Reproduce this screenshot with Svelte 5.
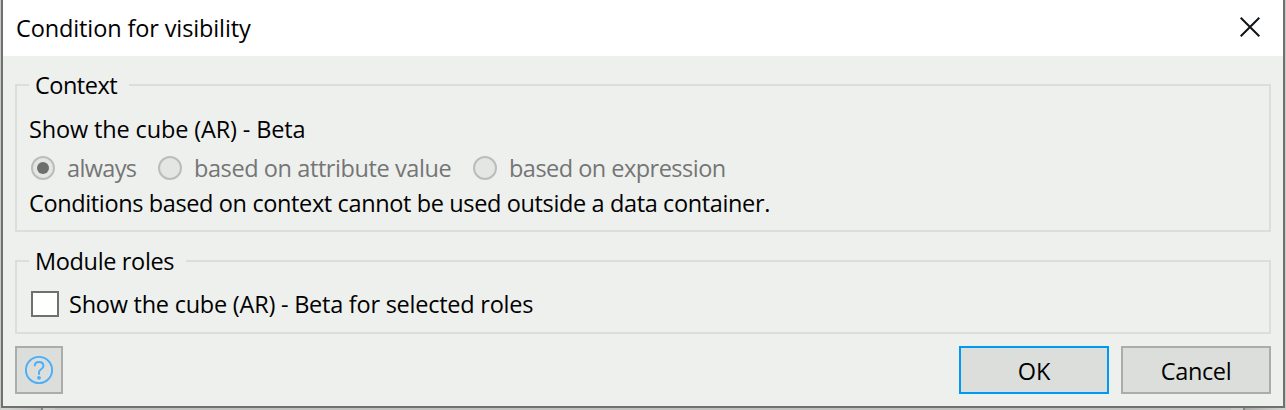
<script>
  const options = [
    { label: 'always', checked: true, cls: 'always' },
    { label: 'based on attribute value', checked: false, cls: 'attribute' },
    { label: 'based on expression', checked: false, cls: 'expression' }
  ];
</script>

<div class="backdrop">
  <section class="dialog">
    <header>
      <span class="title">Condition for visibility</span>
      <svg class="close" width="20" height="20" viewBox="0 0 20 20">
        <path d="M.7.7 19.3 19.3M19.3.7.7 19.3" stroke="#111418" stroke-width="2" fill="none" />
      </svg>
    </header>
    <main>
      <fieldset class="context">
        <legend><span class="t-context">Context</span></legend>
        <div class="line"><span class="t-show">Show the cube (AR) - Beta</span></div>
        <div class="radios">
          {#each options as o}
            <div class="option {o.cls}">
              <i class="radio" class:checked={o.checked}></i>
              <span>{o.label}</span>
            </div>
          {/each}
        </div>
        <div class="line"><span class="t-cond">Conditions based on context cannot be used outside a data container.</span></div>
      </fieldset>
      <fieldset class="roles">
        <legend><span class="t-module">Module roles</span></legend>
        <div class="check">
          <i class="box"></i>
          <span class="t-check">Show the cube (AR) - Beta for selected roles</span>
        </div>
      </fieldset>
      <footer>
        <div class="btn help">
          <svg width="28" height="28" viewBox="0 0 28 28" fill="none" stroke="#4aaef8">
            <circle cx="14" cy="14" r="13.1" stroke-width="1.9" />
            <path d="M9.7 10.2C9.7 7.6 11.5 6 14.1 6s4.3 1.6 4.3 3.9c0 3.5-4.4 3.3-4.4 6.4v2.4" stroke-width="1.9" />
            <circle cx="14" cy="21.8" r="1.9" fill="#4aaef8" stroke="none" />
          </svg>
        </div>
        <div class="btn ok"><span>OK</span></div>
        <div class="btn cancel"><span class="t-cancel">Cancel</span></div>
      </footer>
    </main>
  </section>
  <div class="below"><i class="left"></i><i class="pale"></i><i class="mid"></i><i class="pale"></i><i class="right"></i></div>
</div>

<style>
  .backdrop {
    width: 1286px;
    height: 410px;
    overflow: hidden;
    box-sizing: border-box;
    padding: 0 1px;
    background: #c8cac8;
    font: 400 23.5px/32px "Open Sans", "Noto Sans", sans-serif;
    color: #000;
  }
  .backdrop span { white-space: nowrap; }
  .title { letter-spacing: -.12px; }
  .t-context { letter-spacing: -.5px; }
  .t-show { letter-spacing: -.14px; }
  .always span { letter-spacing: -.65px; }
  .attribute span { letter-spacing: -.41px; }
  .expression span { letter-spacing: -.52px; }
  .t-cond { letter-spacing: -.37px; }
  .t-module { letter-spacing: -.35px; }
  .t-check { letter-spacing: -.24px; }
  .t-cancel { letter-spacing: -.35px; }
  .dialog {
    box-sizing: border-box;
    width: 1284px;
    height: 408px;
    border: solid #6e716e;
    border-width: 0 2px 2px;
    background: #eef0ee;
  }
  header {
    box-sizing: border-box;
    height: 56px;
    padding: 12px 23px 0 13px;
    background: #fff;
    display: flex;
    justify-content: space-between;
  }
  .close { margin-top: 5px; }
  main { padding: 13px 12px 0; }
  fieldset {
    box-sizing: border-box;
    margin: 0;
    min-width: 0;
    border: 2px solid #dbdedb;
    padding: 0 12px;
  }
  .context { height: 163px; }
  .roles { height: 89px; margin-top: 13px; }
  legend {
    box-sizing: border-box;
    height: 32px;
    padding: 0 0 0 6px;
  }
  .context legend { width: 100px; }
  .roles legend { width: 157px; }
  .line { height: 32px; padding-top: 12px; }
  .radios {
    display: flex;
    height: 32px;
    padding: 7px 0 0 2px;
    color: #757575;
  }
  .radios + .line { padding-top: 3px; }
  .option { display: flex; gap: 12px; }
  .option.always { width: 127px; }
  .option.attribute { width: 315px; }
  .radio {
    box-sizing: border-box;
    width: 24px;
    height: 24px;
    margin-top: 4px;
    border: 2px solid #bbbdbb;
    border-radius: 50%;
    background: #e4e6e3;
    display: grid;
    place-items: center;
  }
  .radio.checked::after {
    content: '';
    width: 12px;
    height: 12px;
    border-radius: 50%;
    background: #6c6f6c;
  }
  .check {
    display: flex;
    gap: 10px;
    padding: 11px 0 0 2px;
  }
  .box {
    box-sizing: border-box;
    width: 28px;
    height: 26px;
    margin-top: 3px;
    border: 2px solid #6e716e;
    background: #fff;
  }
  footer {
    display: flex;
    gap: 12px;
    margin-top: 12px;
  }
  .btn {
    box-sizing: border-box;
    width: 150px;
    height: 48px;
    border: 2px solid #abadab;
    background: #dcdedb;
    padding-top: 7px;
    text-align: center;
  }
  .help {
    width: 48px;
    padding: 0;
    margin-right: auto;
    display: grid;
    place-items: center;
  }
  .ok { border-color: #0099f2; }
  .below { display: flex; height: 2px; }
  .left { width: 40px; border-right: 2px solid #858785; background: linear-gradient(90deg, #d2d4d2, #bbb); }
  .pale { width: 12px; background: #c9cbc9; }
  .mid { flex: 1; background: #bfc1bf; }
  .right { width: 40px; border-left: 2px solid #858785; background: linear-gradient(90deg, #aaa, #d2d4d2); }
</style>
